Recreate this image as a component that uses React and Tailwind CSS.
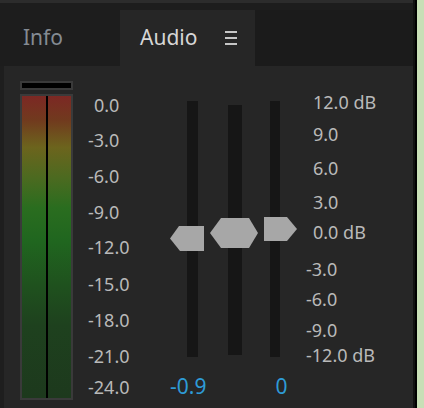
import React from 'react';

const leftScale = [
  { t: '0.0', c: 'mt-[29px] ml-[6px]' },
  { t: '-3.0', c: 'mt-[15px]' },
  { t: '-6.0', c: 'mt-[16px]' },
  { t: '-9.0', c: 'mt-[16px]' },
  { t: '-12.0', c: 'mt-[15px]' },
  { t: '-15.0', c: 'mt-[17px]' },
  { t: '-18.0', c: 'mt-[16px]' },
  { t: '-21.0', c: 'mt-[16px]' },
  { t: '-24.0', c: 'mt-[11px]' },
];

const rightScale = [
  { t: '12.0 dB', c: 'mt-[26px] ml-[7px]' },
  { t: '9.0', c: 'mt-[12px] ml-[7px]' },
  { t: '6.0', c: 'mt-[14px] ml-[7px]' },
  { t: '3.0', c: 'mt-[14px] ml-[7px]' },
  { t: '0.0 dB', c: 'mt-[10px] ml-[7px]' },
  { t: '-3.0', c: 'mt-[17px]' },
  { t: '-6.0', c: 'mt-[10px]' },
  { t: '-9.0', c: 'mt-[11px]' },
  { t: '-12.0 dB', c: 'mt-[5px]' },
];

const meterFill =
  'bg-[linear-gradient(to_bottom,#7c2824_0%,#713a1e_8%,#6c641d_17%,#4c6a20_27%,#2a6d1f_37%,#20661f_48%,#1f521e_62%,#1e411e_76%,#1d391d_100%)]';

// track is the positioning parent, the handle sits over it
const Fader = ({ track, handle, svg }) => (
  <div className={`relative bg-[#161616] ${track}`}>
    <div className={`absolute ${handle}`}>{svg}</div>
  </div>
);

export default function App() {
  return (
    <div className="w-[424px] h-[408px] flex bg-[#c8dfb6] overflow-hidden" style={{ fontFamily: '"Noto Sans", "DejaVu Sans", sans-serif' }}>
      <div className="w-[413px] flex flex-col">
        <div className="h-[10px] bg-[#1d1d1d] border-t-[3px] border-[#2c2c2c]" />
        <div className="h-[56px] flex bg-[#1b1b1b]">
          <div className="w-[120px] bg-[#1d1d1d] flex items-center pl-[23px] pb-[2px]">
            <span className="text-[21px] text-[#848b93] leading-none">Info</span>
          </div>
          <div className="w-[135px] bg-[#262626] flex items-center pl-[20px] pb-[2px]">
            <span className="text-[21px] text-[#d6d6d6] leading-none">Audio</span>
            <div className="ml-[28px] flex flex-col gap-[4px] mt-[2px]">
              <div className="w-[12px] h-[2px] bg-[#c6c6c6]" />
              <div className="w-[12px] h-[2px] bg-[#c6c6c6]" />
              <div className="w-[12px] h-[2px] bg-[#c6c6c6]" />
            </div>
          </div>
        </div>
        <div className="flex-1 flex bg-[#262626] border-l-[4px] border-[#1e1e1e] pl-[16px] text-[18px] text-[#b9b9b9]">
          <div className="w-[53px] flex flex-col">
            <div className="mt-[15px] h-[9px] bg-black border-2 border-[#3a3a3a]" />
            <div className="mt-[4px] h-[306px] border-2 border-[#3a3a3a] flex">
              <div className={`flex-1 ${meterFill}`} />
              <div className="w-[2px] bg-black" />
              <div className={`flex-1 ${meterFill}`} />
            </div>
          </div>
          <div className="w-[99px] ml-[15px] flex flex-col">
            {leftScale.map((s) => (
              <div key={s.t} className={`h-[20px] leading-[20px] ${s.c}`}>{s.t}</div>
            ))}
          </div>
          <div className="w-[93px] flex flex-col">
            <div className="h-[291px] flex items-start">
              <Fader
                track="mt-[35px] w-[11px] h-[256px]"
                handle="left-[-17px] top-[125px] w-[34px] h-[25px]"
                svg={<svg width="34" height="25" viewBox="0 0 34 25"><polygon points="9,0 34,0 34,25 10,25 0,12.5" fill="#a7a7a7" /></svg>}
              />
              <Fader
                track="ml-[30px] mt-[39px] w-[14px] h-[250px]"
                handle="left-[-18px] top-[113px] w-[48px] h-[30px]"
                svg={<svg width="48" height="30" viewBox="0 0 48 30"><polygon points="11,0 39,0 48,15 39,30 11,30 0,15" fill="#a7a7a7" /></svg>}
              />
              <Fader
                track="ml-[28px] mt-[35px] w-[10px] h-[256px]"
                handle="left-[-6px] top-[116px] w-[33px] h-[24px]"
                svg={<svg width="33" height="24" viewBox="0 0 33 24"><polygon points="0,0 23,0 33,12 23,24 0,24" fill="#a7a7a7" /></svg>}
              />
            </div>
            <div className="mt-[17px] flex text-[21px] leading-[24px] text-[#2e9bd6]">
              <div className="ml-[-17px] w-[37px]">-0.9</div>
              <div className="ml-[69px]">0</div>
            </div>
          </div>
          <div className="ml-[26px] flex flex-col">
            {rightScale.map((s) => (
              <div key={s.t} className={`h-[20px] leading-[20px] whitespace-nowrap ${s.c}`}>{s.t}</div>
            ))}
          </div>
        </div>
      </div>
      <div className="w-[2px] bg-[#111111]" />
      <div className="w-[2px] bg-black" />
      <div className="flex-1 bg-[#c8dfb6]" />
    </div>
  );
}
